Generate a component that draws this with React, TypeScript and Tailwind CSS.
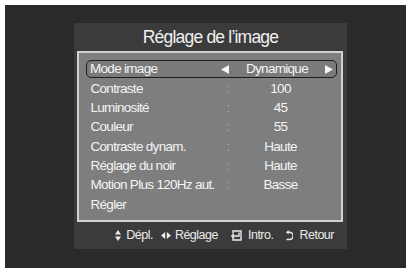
import React from 'react';

const rows = [
  { label: 'Contraste', value: '100' },
  { label: 'Luminosité', value: '45' },
  { label: 'Couleur', value: '55' },
  { label: 'Contraste dynam.', value: 'Haute' },
  { label: 'Réglage du noir', value: 'Haute' },
  { label: 'Motion Plus 120Hz aut.', value: 'Basse' },
];

const UpDown = () => (
  <svg width="6" height="11" viewBox="0 0 6 11" className="fill-[#ececec]">
    <polygon points="0,4.5 3,0 6,4.5" />
    <polygon points="0,6.5 6,6.5 3,11" />
  </svg>
);

const LeftRight = () => (
  <svg width="10" height="7" viewBox="0 0 10 7" className="fill-[#ececec]">
    <polygon points="0,3.5 4.2,0 4.2,7" />
    <polygon points="5.8,0 10,3.5 5.8,7" />
  </svg>
);

const Enter = () => (
  <svg width="12" height="11" viewBox="0 0 12 11" fill="none" stroke="#ececec" strokeWidth="1.4">
    <path d="M3 3.5V1h8v9H3V7.5" />
    <path d="M9 2.5v3.5H2" />
    <path d="M4 4L1.8 6 4 8" />
  </svg>
);

const Back = () => (
  <svg width="7" height="11" viewBox="0 0 7 11" fill="none" stroke="#ececec" strokeWidth="1.5">
    <path d="M2 2.2h1.5a3.6 3.6 0 0 1 0 7.2H0.5" />
    <polygon points="0,2.2 2.6,0 2.6,4.4" fill="#ececec" stroke="none" />
  </svg>
);

const Tri = ({ dir }: { dir: 'l' | 'r' }) => (
  <svg width="8" height="9" viewBox="0 0 8 9" className="fill-[#f4f4f4]">
    <polygon points={dir === 'l' ? '8,0 8,9 0,4.5' : '0,0 0,9 8,4.5'} />
  </svg>
);

export default function App() {
  return (
    <div className="w-[406px] h-[268px] bg-white pt-[5px] pl-[5px] flex" style={{ fontFamily: '"Liberation Sans", Arial, sans-serif' }}>
      <div className="flex-1 bg-[#2b2a2a] pl-[69px] pt-[18px]">
        <div className="w-[273px] h-[226px] bg-[#3b3b3b] flex flex-col">
          <div className="h-[28px] flex items-center justify-center text-[17.5px] text-[#f0f0f0] tracking-[-0.8px]">
            Réglage de l’image
          </div>
          <div className="ml-[3px] w-[266px] h-[171px] border-2 border-[#d2d2d2] bg-[#7e7e7e] pt-[7px] pl-[7px] pr-[4px] text-[13.5px] text-[#f4f4f4] tracking-[-0.7px]">
            <div className="h-[18px] mb-[1.3px] flex items-center border-[1.5px] border-[#1e1e1e] rounded-[5px] pl-[3px] bg-[#7a7a7a]">
              <span className="w-[131px]">Mode image</span>
              <Tri dir="l" />
              <span className="w-[96px] text-center">Dynamique</span>
              <Tri dir="r" />
            </div>
            {rows.map((r) => (
              <div key={r.label} className="h-[19.3px] flex items-center pl-[4.5px]">
                <span className="w-[136px] whitespace-nowrap">{r.label}</span>
                <span className="w-[6px] text-[#a8a8a8]">:</span>
                <span className="w-[96px] text-center">{r.value}</span>
              </div>
            ))}
            <div className="h-[19.3px] flex items-center pl-[4.5px]">Régler</div>
          </div>
          <div className="flex-1 flex items-center justify-end pr-[13px] text-[12.5px] text-[#ececec] tracking-[-0.5px]">
            <span className="flex items-center gap-[5px]"><UpDown />Dépl.</span>
            <span className="flex items-center gap-[4px] ml-[8px]"><LeftRight />Réglage</span>
            <span className="flex items-center gap-[6px] ml-[12px]"><Enter />Intro.</span>
            <span className="flex items-center gap-[6px] ml-[13px]"><Back />Retour</span>
          </div>
        </div>
      </div>
    </div>
  );
}
